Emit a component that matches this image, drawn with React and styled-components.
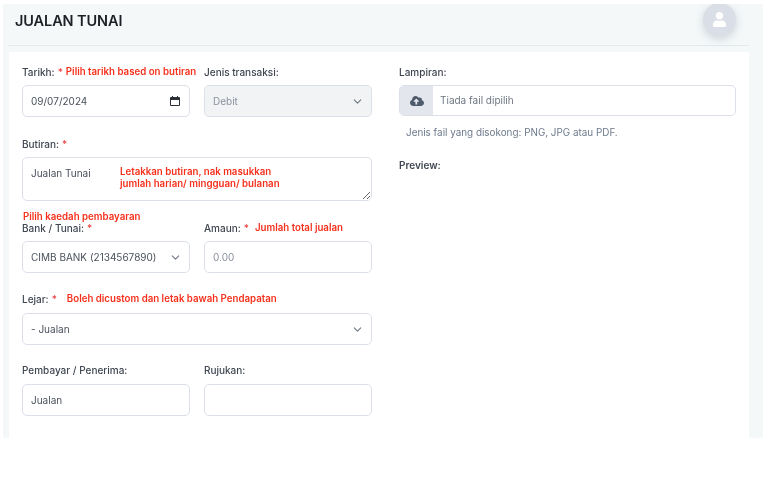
import React from 'react'
import styled, { createGlobalStyle } from 'styled-components'
import { ChevronDown } from 'lucide-react'
import { FaCloudUploadAlt, FaUser } from 'react-icons/fa'

const GlobalStyle = createGlobalStyle`
  html, body {
    background: #fff;
    margin: 0;
    padding: 0;
  }

  body {
    font-family: Inter, "Liberation Sans", sans-serif;
    height: 500px;
    overflow: hidden;
  }
`

const Panel = styled.div`
  background: #f4f8f9;
  border-radius: 2px;
  filter: blur(0.35px);
  height: 434px;
  margin: 4px 0 0 3px;
  overflow: hidden;
  padding: 0 14px 0 5px;
  width: 741px;
`
const Header = styled.header`
  align-items: center;
  border-bottom: 1px solid #e4e9ec;
  box-sizing: border-box;
  display: flex;
  height: 42px;
  justify-content: space-between;
  padding: 0 13px 7px 7px;
`
const Title = styled.h1`
  color: #1d2126;
  font-size: 14.5px;
  font-weight: 600;
  letter-spacing: -0.1px;
  line-height: 20px;
  margin: 0;
`
const Avatar = styled.div`
  align-items: center;
  align-self: flex-start;
  background: #dadfe7;
  border-radius: 50%;
  box-shadow: 0 3px 8px rgba(90, 105, 125, 0.25);
  color: #fff;
  display: flex;
  height: 33px;
  justify-content: center;
  margin-top: -1px;
  width: 33px;
`
const Card = styled.main`
  background: #fff;
  display: grid;
  gap: 27px;
  grid-template-columns: 350px 337px;
  height: 386px;
  margin: 6px 0 0 1px;
  padding: 14px 13px 0;
  width: 714px;
`
const Column = styled.div`
  display: flex;
  flex-direction: column;
`
const Row = styled.div`
  display: grid;
  gap: 14px;
  grid-template-columns: 168px 168px;
  margin-top: ${p => p.$top || 0}px;
`
const Field = styled.div`
  margin-top: ${p => p.$top || 0}px;
  min-width: 0;
`
const LabelRow = styled.div`
  align-items: center;
  display: flex;
  gap: ${p => p.$gap || 3}px;
  height: 12px;
  margin-bottom: ${p => p.$bottom || 7}px;
  white-space: nowrap;
`
const Label = styled.label`
  color: #3f4651;
  font-size: 10px;
  font-weight: 500;
  line-height: 12px;
`
const Star = styled.span`
  color: #ef4444;
  margin-left: 3px;
`
const Note = styled.span`
  color: #f5301c;
  font-size: 9.7px;
  font-weight: 600;
  line-height: 12px;
  white-space: nowrap;
`
const Input = styled.div`
  align-items: center;
  background: ${p => (p.$disabled ? '#f1f3f5' : '#fff')};
  border: 1px solid #dbe0e8;
  border-radius: 5px;
  box-sizing: border-box;
  color: ${p => (p.$muted ? '#8a929d' : '#4a515c')};
  display: flex;
  font-size: 10px;
  height: 32px;
  justify-content: space-between;
  padding: 0 9px 0 8px;
`
const Chevron = styled(ChevronDown)`
  color: #6f7782;
  flex: none;
  margin-right: -2px;
`
const TextareaWrap = styled.div`
  height: 44px;
  position: relative;
`
const Textarea = styled.textarea`
  background: #fff;
  border: 1px solid #dbe0e8;
  border-radius: 5px;
  box-sizing: border-box;
  color: #4a515c;
  display: block;
  font-family: inherit;
  font-size: 10px;
  height: 44px;
  line-height: 14px;
  margin: 0;
  outline: none;
  padding: 8px 8px;
  width: 100%;
`
const TextareaNote = styled(Note)`
  left: 98px;
  line-height: 12px;
  position: absolute;
  top: 9px;
`
const PayNote = styled(Note)`
  display: block;
  margin: 10px 0 -1px 1px;
`
const Upload = styled.div`
  align-items: center;
  border: 1px solid #dbe0e8;
  border-radius: 5px;
  box-sizing: border-box;
  display: flex;
  height: 31px;
  overflow: hidden;
`
const UploadIcon = styled.div`
  align-items: center;
  align-self: stretch;
  background: #e3e7ed;
  color: #4f5b6b;
  display: flex;
  justify-content: center;
  width: 33px;
`
const UploadText = styled.span`
  color: #6f7782;
  font-size: 10px;
  margin: -1px 0 0 7px;
`
const Help = styled.p`
  color: #6d7a8c;
  font-size: 9.9px;
  line-height: 12px;
  margin: 10px 0 0 7px;
`
const PreviewLabel = styled(Label)`
  font-weight: 600;
  margin-top: 21px;
`

const CalendarIcon = () => (
  <svg width="10" height="10" viewBox="0 0 10 10" aria-hidden="true">
    <path
      fill="#2b2f36"
      fillRule="evenodd"
      d="M1 1h1V0h1v1h4V0h1v1h1a1 1 0 0 1 1 1v7a1 1 0 0 1-1 1H1a1 1 0 0 1-1-1V2a1 1 0 0 1 1-1zm0 3v5h8V4H1z"
    />
  </svg>
)

const App = () => (
  <>
    <GlobalStyle />
    <Panel>
      <Header>
        <Title>JUALAN TUNAI</Title>
        <Avatar>
          <FaUser size={15} />
        </Avatar>
      </Header>
      <Card>
        <Column>
          <Row>
            <Field>
              <LabelRow>
                <Label>
                  Tarikh:<Star>*</Star>
                </Label>
                <Note>Pilih tarikh based on butiran</Note>
              </LabelRow>
              <Input>
                09/07/2024
                <CalendarIcon />
              </Input>
            </Field>
            <Field>
              <LabelRow>
                <Label>Jenis transaksi:</Label>
              </LabelRow>
              <Input $disabled $muted>
                Debit
                <Chevron size={13} />
              </Input>
            </Field>
          </Row>
          <Field $top={21}>
            <LabelRow>
              <Label>
                Butiran:<Star>*</Star>
              </Label>
            </LabelRow>
            <TextareaWrap>
              <Textarea readOnly value="Jualan Tunai" />
              <TextareaNote>
                Letakkan butiran, nak masukkan
                <br />
                jumlah harian/ mingguan/ bulanan
              </TextareaNote>
            </TextareaWrap>
          </Field>
          <PayNote>Pilih kaedah pembayaran</PayNote>
          <Row>
            <Field>
              <LabelRow>
                <Label>
                  Bank / Tunai:<Star>*</Star>
                </Label>
              </LabelRow>
              <Input>
                CIMB BANK (2134567890)
                <Chevron size={13} />
              </Input>
            </Field>
            <Field>
              <LabelRow $gap={6}>
                <Label>
                  Amaun:<Star>*</Star>
                </Label>
                <Note>Jumlah total jualan</Note>
              </LabelRow>
              <Input $muted>0.00</Input>
            </Field>
          </Row>
          <Field $top={20}>
            <LabelRow $gap={10} $bottom={8}>
              <Label>
                Lejar:<Star>*</Star>
              </Label>
              <Note>Boleh dicustom dan letak bawah Pendapatan</Note>
            </LabelRow>
            <Input>
              - Jualan
              <Chevron size={13} />
            </Input>
          </Field>
          <Row $top={19}>
            <Field>
              <LabelRow $bottom={8}>
                <Label>Pembayar / Penerima:</Label>
              </LabelRow>
              <Input>Jualan</Input>
            </Field>
            <Field>
              <LabelRow $bottom={8}>
                <Label>Rujukan:</Label>
              </LabelRow>
              <Input />
            </Field>
          </Row>
        </Column>
        <Column>
          <LabelRow>
            <Label>Lampiran:</Label>
          </LabelRow>
          <Upload>
            <UploadIcon>
              <FaCloudUploadAlt size={14} />
            </UploadIcon>
            <UploadText>Tiada fail dipilih</UploadText>
          </Upload>
          <Help>Jenis fail yang disokong: PNG, JPG atau PDF.</Help>
          <PreviewLabel>Preview:</PreviewLabel>
        </Column>
      </Card>
    </Panel>
  </>
)

export default App
